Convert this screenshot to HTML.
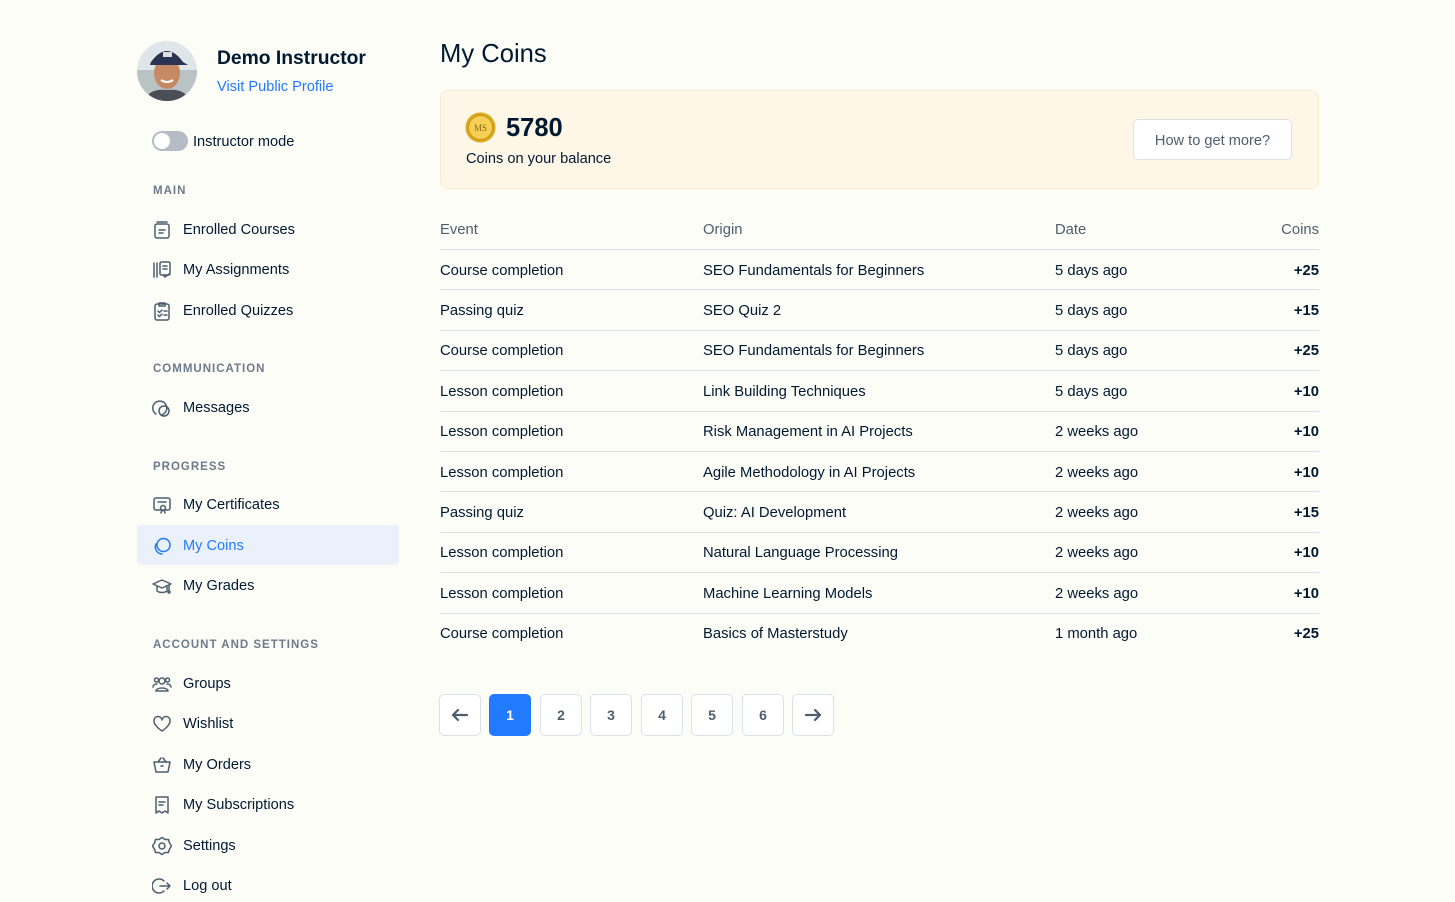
<!DOCTYPE html>
<html><head><meta charset="utf-8"><style>
*{margin:0;padding:0;box-sizing:border-box}
body{width:1455px;height:902px;background:#fdfdf8;font-family:"Liberation Sans",sans-serif;color:#001931;position:relative;overflow:hidden}
.a{position:absolute;white-space:nowrap}
.nav{position:absolute;left:152px;height:24px;display:flex;align-items:center;font-size:14.6px;color:#001931}
.nav svg{width:20px;height:20px;margin-right:11px;fill:none;stroke:#4d5e6f;stroke-width:1.5;stroke-linecap:round;stroke-linejoin:round}
.sec{position:absolute;left:153px;font-size:11.5px;font-weight:bold;letter-spacing:1px;color:#6c7a8a}
.th{position:absolute;top:222px;font-size:14.8px;color:#4d5e6f}
.row{position:absolute;left:440px;width:879px;height:40.4px;border-top:1px solid #dbe0ea;font-size:14.8px}
.row span{position:absolute;top:12.5px}
.pg{position:absolute;top:694px;width:42px;height:42px;border:1px solid #dbe0ea;border-radius:5px;background:#fff;display:flex;align-items:center;justify-content:center;font-weight:bold;font-size:14px;color:#4d5e6f}
</style></head><body>
<svg class="a" style="left:136px;top:40px" width="62" height="62" viewBox="0 0 62 62">
<defs><clipPath id="c"><circle cx="31" cy="31" r="30"/></clipPath></defs>
<g clip-path="url(#c)"><rect width="62" height="62" fill="#dfe6ea"/><rect y="30" width="62" height="32" fill="#b9c3c4"/>
<ellipse cx="31" cy="33" rx="13" ry="16" fill="#c58a63"/><path d="M15 22 Q31 0 47 22 L52 25 L14 25Z" fill="#2a3352"/><rect x="27" y="12" width="9" height="5" fill="#ddd"/>
<path d="M8 62 Q12 48 31 50 Q50 48 54 62Z" fill="#4a4f57"/><path d="M25 40 Q31 44 37 40" stroke="#fff" stroke-width="2" fill="none"/></g></svg>
<div class="a" style="left:217px;top:48px;font-size:19.3px;font-weight:bold">Demo Instructor</div>
<div class="a" style="left:217px;top:79px;font-size:14.6px;color:#227aff">Visit Public Profile</div>
<div class="a" style="left:152px;top:131px;width:36px;height:20px;border-radius:10px;background:#b5bcc6"></div>
<div class="a" style="left:154px;top:133px;width:16px;height:16px;border-radius:8px;background:#fff"></div>
<div class="a" style="left:193px;top:134px;font-size:14.6px">Instructor mode</div>

<div class="sec" style="top:185px">MAIN</div>
<div class="nav" style="top:218px"><svg viewBox="0 0 20 20"><rect x="3" y="4" width="14" height="14" rx="2"/><path d="M5 2h10M7 10h6M7 13h4"/></svg>Enrolled Courses</div>
<div class="nav" style="top:258px"><svg viewBox="0 0 20 20"><path d="M2 3v14M5 3v14"/><rect x="8" y="2" width="10" height="13" rx="1.5"/><path d="M11 6h4M11 9h4M11 15l2 2 4-3"/></svg>My Assignments</div>
<div class="nav" style="top:299px"><svg viewBox="0 0 20 20"><rect x="3" y="3" width="14" height="16" rx="2"/><path d="M7 2h6v3H7zM6 10l1.5 1.5L10 9M12 10h3M6 14l1.5 1.5L10 13M12 14h3"/></svg>Enrolled Quizzes</div>

<div class="sec" style="top:363px">COMMUNICATION</div>
<div class="nav" style="top:396px"><svg viewBox="0 0 20 20"><path d="M4 16a7 7 0 1 1 5 1"/><circle cx="12" cy="13" r="5"/></svg>Messages</div>

<div class="sec" style="top:461px">PROGRESS</div>
<div class="nav" style="top:493px"><svg viewBox="0 0 20 20"><rect x="2" y="3" width="16" height="12" rx="2"/><path d="M6 7h8"/><circle cx="11" cy="13" r="2.5"/><path d="M10 15l-1 3M12 15l1 3"/></svg>My Certificates</div>
<div class="a" style="left:137px;top:525px;width:262px;height:40px;background:#eaf1fb;border-radius:4px"></div>
<div class="nav" style="top:534px;color:#227aff"><svg viewBox="0 0 20 20" style="stroke:#227aff"><circle cx="11.5" cy="9" r="6.5"/><path d="M4 8a7 7 0 0 0 6 10"/></svg>My Coins</div>
<div class="nav" style="top:574px"><svg viewBox="0 0 20 20"><path d="M1 8l9-4 9 4-9 4z"/><path d="M5 10v5c3 2 7 2 10 0v-5M17 9v6"/><circle cx="17" cy="16" r="1"/></svg>My Grades</div>

<div class="sec" style="top:639px">ACCOUNT AND SETTINGS</div>
<div class="nav" style="top:672px"><svg viewBox="0 0 20 20"><circle cx="10" cy="7" r="3"/><circle cx="4.5" cy="6" r="2"/><circle cx="15.5" cy="6" r="2"/><path d="M4 17c0-4 12-4 12 0zM1 13c0-2 2-3 4-3M19 13c0-2-2-3-4-3"/></svg>Groups</div>
<div class="nav" style="top:712px"><svg viewBox="0 0 20 20"><path d="M10 17S2 12 2 7a4 4 0 0 1 8-1 4 4 0 0 1 8 1c0 5-8 10-8 10z"/></svg>Wishlist</div>
<div class="nav" style="top:753px"><svg viewBox="0 0 20 20"><path d="M2 7h16l-2 10H4z"/><path d="M6 7l3-4M14 7l-3-4M9 11h2"/></svg>My Orders</div>
<div class="nav" style="top:793px"><svg viewBox="0 0 20 20"><path d="M4 2h12v16l-3-2-3 2-3-2-3 2z"/><path d="M7 7h6M7 10h4"/></svg>My Subscriptions</div>
<div class="nav" style="top:834px"><svg viewBox="0 0 20 20"><path d="M10 1.5l3 2h3.5l1 3.5 2 3-2 3-1 3.5H13l-3 2-3-2H3.5l-1-3.5-2-3 2-3 1-3.5H7z"/><circle cx="10" cy="10" r="3"/></svg>Settings</div>
<div class="nav" style="top:874px"><svg viewBox="0 0 20 20"><path d="M12 5a7 7 0 1 0 0 10M8 10h10M15 7l3 3-3 3"/></svg>Log out</div>

<div class="a" style="left:440px;top:40px;font-size:25.6px">My Coins</div>
<div class="a" style="left:440px;top:90px;width:879px;height:99px;background:#fef6e6;border:1px solid #fbeccf;border-radius:8px"></div>
<svg class="a" style="left:465px;top:112px" width="31" height="31" viewBox="0 0 31 31"><circle cx="15.5" cy="15.5" r="15" fill="#d9a81a"/><circle cx="15.5" cy="15.5" r="12" fill="#f5cf56" stroke="#c9961a"/><text x="15.5" y="19" font-size="9" text-anchor="middle" fill="#8a6a10" font-family="Liberation Serif,serif">MS</text></svg>
<div class="a" style="left:506px;top:114px;font-size:25.5px;font-weight:bold">5780</div>
<div class="a" style="left:466px;top:151px;font-size:14.6px">Coins on your balance</div>
<div class="a" style="left:1133px;top:119px;width:159px;height:41px;background:#fff;border:1px solid #dbe0ea;border-radius:5px;font-size:14.6px;color:#4d5e6f;display:flex;align-items:center;justify-content:center;padding-top:2px">How to get more?</div>

<div class="th" style="left:440px">Event</div><div class="th" style="left:703px">Origin</div><div class="th" style="left:1055px">Date</div><div class="th" style="right:136px">Coins</div>

<div class="row" style="top:249px"><span style="left:0">Course completion</span><span style="left:263px">SEO Fundamentals for Beginners</span><span style="left:615px">5 days ago</span><span style="right:0;font-weight:bold">+25</span></div>
<div class="row" style="top:289.4px"><span style="left:0">Passing quiz</span><span style="left:263px">SEO Quiz 2</span><span style="left:615px">5 days ago</span><span style="right:0;font-weight:bold">+15</span></div>
<div class="row" style="top:329.8px"><span style="left:0">Course completion</span><span style="left:263px">SEO Fundamentals for Beginners</span><span style="left:615px">5 days ago</span><span style="right:0;font-weight:bold">+25</span></div>
<div class="row" style="top:370.2px"><span style="left:0">Lesson completion</span><span style="left:263px">Link Building Techniques</span><span style="left:615px">5 days ago</span><span style="right:0;font-weight:bold">+10</span></div>
<div class="row" style="top:410.6px"><span style="left:0">Lesson completion</span><span style="left:263px">Risk Management in AI Projects</span><span style="left:615px">2 weeks ago</span><span style="right:0;font-weight:bold">+10</span></div>
<div class="row" style="top:451px"><span style="left:0">Lesson completion</span><span style="left:263px">Agile Methodology in AI Projects</span><span style="left:615px">2 weeks ago</span><span style="right:0;font-weight:bold">+10</span></div>
<div class="row" style="top:491.4px"><span style="left:0">Passing quiz</span><span style="left:263px">Quiz: AI Development</span><span style="left:615px">2 weeks ago</span><span style="right:0;font-weight:bold">+15</span></div>
<div class="row" style="top:531.8px"><span style="left:0">Lesson completion</span><span style="left:263px">Natural Language Processing</span><span style="left:615px">2 weeks ago</span><span style="right:0;font-weight:bold">+10</span></div>
<div class="row" style="top:572.2px"><span style="left:0">Lesson completion</span><span style="left:263px">Machine Learning Models</span><span style="left:615px">2 weeks ago</span><span style="right:0;font-weight:bold">+10</span></div>
<div class="row" style="top:612.6px"><span style="left:0">Course completion</span><span style="left:263px">Basics of Masterstudy</span><span style="left:615px">1 month ago</span><span style="right:0;font-weight:bold">+25</span></div>

<div class="pg" style="left:439px"><svg width="18" height="14" viewBox="0 0 18 14" fill="none" stroke="#4d5e6f" stroke-width="2.2" stroke-linecap="round" stroke-linejoin="round"><path d="M16 7H2M7 2L2 7l5 5"/></svg></div>
<div class="pg" style="left:489px;background:#227aff;border-color:#227aff;color:#fff">1</div>
<div class="pg" style="left:540px">2</div>
<div class="pg" style="left:590px">3</div>
<div class="pg" style="left:641px">4</div>
<div class="pg" style="left:691px">5</div>
<div class="pg" style="left:742px">6</div>
<div class="pg" style="left:792px"><svg width="18" height="14" viewBox="0 0 18 14" fill="none" stroke="#4d5e6f" stroke-width="2.2" stroke-linecap="round" stroke-linejoin="round"><path d="M2 7h14M11 2l5 5-5 5"/></svg></div>
</body></html>
